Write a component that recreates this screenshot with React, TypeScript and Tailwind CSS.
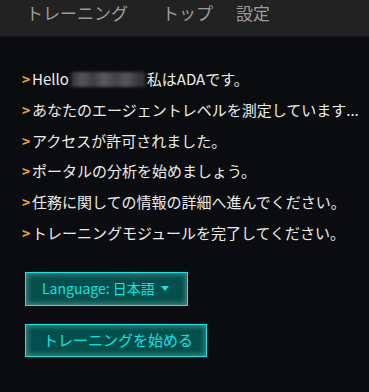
import React from "react";

const lines: React.ReactNode[] = [
  null,
  "あなたのエージェントレベルを測定しています...",
  "アクセスが許可されました。",
  "ポータルの分析を始めましょう。",
  "任務に関しての情報の詳細へ進んでください。",
  "トレーニングモジュールを完了してください。",
];

export default function App() {
  const font = { fontFamily: '"Noto Sans CJK JP", "Noto Sans", sans-serif' };
  return (
    <div className="w-[369px] h-[392px] bg-[#0b0c0f] overflow-hidden" style={font}>
      <div className="h-[37px] bg-[#222222] border-b border-[#141414] flex items-start text-[17px] leading-[26px] text-[#9c9c9c]">
        <span className="ml-[26px]">トレーニング</span>
        <span className="ml-[34px]">トップ</span>
        <span className="ml-[23px]">設定</span>
      </div>
      <div className="pl-[22px] pt-[27px]">
        <div className="flex flex-col text-[15px] leading-[30.8px] text-[#ececec]">
          {lines.map((l, i) => (
            <div key={i} className="flex items-center whitespace-nowrap">
              <span className="text-[#f0a02c] font-bold w-[10px] text-[14px]">&gt;</span>
              {i === 0 ? (
                <>
                  <span>Hello</span>
                  <span className="inline-block w-[74px] h-[15px] mx-[2px] bg-[linear-gradient(90deg,#3a3a3a,#6a6a6a_15%,#4a4a4a_30%,#707070_45%,#505050_60%,#6a6a6a_75%,#444_90%,#3a3a3a)] blur-[1.5px] opacity-80" />
                  <span>私はADAです。</span>
                </>
              ) : (
                <span>{l}</span>
              )}
            </div>
          ))}
        </div>
        <div className="mt-[23px] ml-[3px] flex flex-col items-start gap-[18px]">
          <button className="h-[34px] w-[163px] pl-[16px] flex items-center gap-[6px] bg-[#034f4c] border border-[#10e8e8] shadow-[inset_0_0_5px_2px_rgba(150,230,220,0.35)] text-[#10e4e4] text-[14px]">
            <span>Language: 日本語</span>
            <svg width="8" height="5" viewBox="0 0 8 5"><path d="M0 0h8L4 5z" fill="#10e4e4" /></svg>
          </button>
          <button className="h-[33px] w-[182px] pl-[17px] flex items-center bg-[#034f4c] border border-[#10e8e8] shadow-[inset_0_0_5px_2px_rgba(150,230,220,0.35)] text-[#10e4e4] text-[15px]">
            トレーニングを始める
          </button>
        </div>
      </div>
    </div>
  );
}
